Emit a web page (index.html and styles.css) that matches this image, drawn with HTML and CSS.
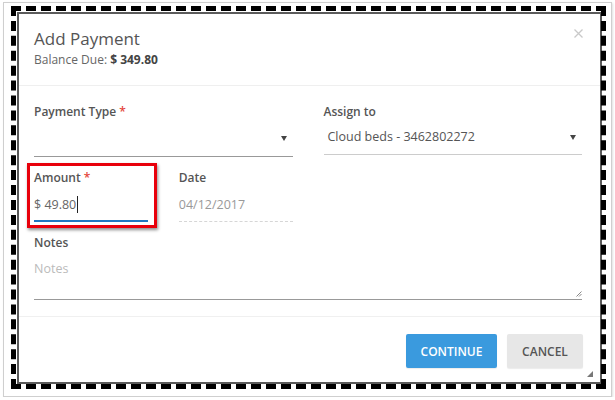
FILE: index.html
```html
<!DOCTYPE HTML>
<html>
<head>
    <meta name="viewport" content="width=device-width, initial-scale=1.0">
    <link rel="stylesheet" href="styles.css">
</head>
<body>
    <div class="shot">
        <div class="frame">
            <div class="dialog">
                <div class="head">
                    <h1 class="title">Add Payment</h1>
                    <div class="balance">Balance Due: <b>$ 349.80</b></div>
                    <svg class="close" width="9" height="9" viewBox="0 0 9 9"><path d="M0.5 0.5L8.5 8.5M8.5 0.5L0.5 8.5" stroke="#c9c9c9" stroke-width="1.3"/></svg>
                </div>
                <div class="body">
                    <div class="row">
                        <div class="field">
                            <label class="label">Payment Type <span class="req">*</span></label>
                            <div class="select dark">
                                <span class="val"></span>
                                <svg class="caret" width="6" height="5" viewBox="0 0 6 5"><path d="M0 0H6L3 5Z" fill="#444"/></svg>
                            </div>
                        </div>
                        <div class="field">
                            <label class="label">Assign to</label>
                            <div class="select light">
                                <span class="val">Cloud beds - 3462802272</span>
                                <svg class="caret" width="6" height="5" viewBox="0 0 6 5"><path d="M0 0H6L3 5Z" fill="#444"/></svg>
                            </div>
                        </div>
                    </div>
                    <div class="row">
                        <div class="pair">
                            <div class="field marked">
                                <label class="label">Amount <span class="req">*</span></label>
                                <div class="input focus"><span class="typed">$ 49.80</span></div>
                                <div class="mark"></div>
                            </div>
                            <div class="field">
                                <label class="label">Date</label>
                                <div class="input dashed"><span class="muted">04/12/2017</span></div>
                            </div>
                        </div>
                    </div>
                    <div class="field notes">
                        <label class="label">Notes</label>
                        <div class="textarea">
                            <span class="placeholder">Notes</span>
                            <svg class="grip" width="6" height="6" viewBox="0 0 6 6"><path d="M0.5 5.5L5.5 0.5M3 5.5L5.5 3" stroke="#888" stroke-width="1"/></svg>
                        </div>
                    </div>
                </div>
                <div class="foot">
                    <button class="btn primary">CONTINUE</button>
                    <button class="btn">CANCEL</button>
                    <svg class="corner" width="6" height="6" viewBox="0 0 6 6"><path d="M0 6L6 0V6Z" fill="#777"/></svg>
                </div>
            </div>
        </div>
    </div>
</body>
</html>
```

FILE: styles.css
```css
* {
    margin: 0;
    padding: 0;
    box-sizing: border-box;
}
body {
    background: #fff;
    font-family: "Open Sans", "Liberation Sans", sans-serif;
    color: #555;
    padding: 2px 0 0 3px;
}
.shot {
    width: 609px;
    height: 395px;
    border: 1px solid #cfcfcf;
    box-shadow: 1px 1px 2px rgba(0, 0, 0, 0.12);
    padding: 3px 4px 0 7px;
}
.frame {
    position: relative;
    width: 595px;
    height: 383px;
    padding: 6px 4px 0 6px;
}
.frame::after {
    content: "";
    position: absolute;
    top: 0;
    left: 0;
    right: 0;
    bottom: 0;
    border: 5px dashed #000;
    pointer-events: none;
}
.dialog {
    height: 372px;
    border: 2px solid #5b5b5b;
    background: #fff;
}
.head {
    position: relative;
    height: 72px;
    padding: 13px 15px 0;
    border-bottom: 1px solid #efefef;
}
.title {
    font-size: 17px;
    font-weight: 400;
    line-height: 24px;
    color: #555;
}
.balance {
    margin-top: 1px;
    font-size: 12px;
    line-height: 16px;
    color: #666;
}
.balance b {
    font-weight: 700;
    color: #444;
}
.close {
    position: absolute;
    right: 17px;
    top: 15px;
}
.body {
    height: 231px;
    padding: 18px 18px 0 15px;
    border-bottom: 1px solid #f0f0f0;
}
.row {
    display: grid;
    grid-template-columns: 1fr 1fr;
    column-gap: 31px;
    margin-bottom: 13px;
}
.pair {
    display: grid;
    grid-template-columns: 1fr 1fr;
    column-gap: 31px;
}
.field {
    position: relative;
}
.label {
    display: block;
    font-size: 12px;
    font-weight: 600;
    line-height: 16px;
    color: #555;
    margin-bottom: 2px;
}
.req {
    color: #e4453c;
}
.select {
    display: flex;
    justify-content: space-between;
    align-items: center;
    height: 35px;
    padding: 0 6px 2px 4px;
    font-size: 12.5px;
    line-height: 18px;
    color: #555;
}
.select.dark {
    border-bottom: 1px solid #999;
}
.select.light {
    border-bottom: 1px solid #ccc;
    height: 33px;
}
.input {
    height: 34px;
    padding-top: 8px;
    font-size: 12.5px;
    line-height: 18px;
}
.input.focus {
    border-bottom: 2px solid #1f78c1;
}
.input.dashed {
    border-bottom: 1px dashed #d6d6d6;
}
.typed {
    color: #666;
    border-right: 1px solid #222;
    padding-right: 1px;
}
.muted {
    color: #999;
}
.mark {
    position: absolute;
    left: -7px;
    top: -7px;
    right: -9px;
    bottom: -6px;
    border: 3px solid #e8000b;
    box-shadow: 1px 2px 3px rgba(0, 0, 0, 0.45);
}
.textarea {
    position: relative;
    height: 47px;
    padding-top: 7px;
    border-bottom: 1px solid #999;
    font-size: 12.5px;
    line-height: 18px;
}
.placeholder {
    color: #bbb;
}
.grip {
    position: absolute;
    right: 0;
    bottom: 2px;
}
.foot {
    position: relative;
    display: flex;
    justify-content: flex-end;
    gap: 10px;
    padding: 17px 17px 0 0;
    height: 67px;
}
.btn {
    width: 76px;
    height: 34px;
    border: none;
    border-radius: 2px;
    font-family: "Open Sans", "Liberation Sans", sans-serif;
    font-size: 12px;
    font-weight: 600;
    background: #e7e7e7;
    color: #555;
    box-shadow: 0 1px 1px rgba(0, 0, 0, 0.08);
}
.btn.primary {
    width: 91px;
    background: #3a9ade;
    color: #fff;
}
.corner {
    position: absolute;
    right: 7px;
    bottom: 7px;
}
```
